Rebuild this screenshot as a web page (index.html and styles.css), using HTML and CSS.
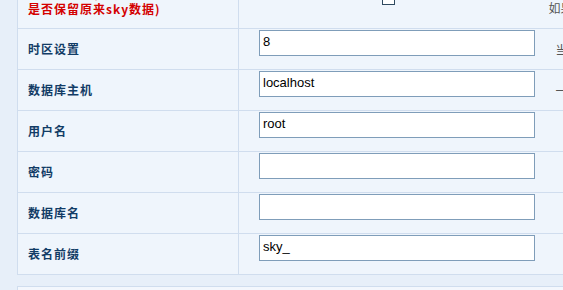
FILE: index.html
```html
<!DOCTYPE html>
<html lang="zh-CN">
<head>
<meta charset="utf-8">
<title>安装设置</title>
<link rel="stylesheet" href="styles.css">
</head>
<body>
<div class="page">
  <table class="form">
    <tr class="row-first">
      <th class="label"><span class="line-hidden">清空数据库(不选中则</span><br><span class="warn">是否保留原来sky数据)</span></th>
      <td class="field field-center"><input type="checkbox" class="chk"></td>
      <td class="note note-first">如果</td>
    </tr>
    <tr>
      <th class="label">时区设置</th>
      <td class="field"><input type="text" class="txt" value="8"></td>
      <td class="note">当前服务器时区</td>
    </tr>
    <tr>
      <th class="label">数据库主机</th>
      <td class="field"><input type="text" class="txt" value="localhost"></td>
      <td class="note">一般为localhost</td>
    </tr>
    <tr>
      <th class="label">用户名</th>
      <td class="field"><input type="text" class="txt" value="root"></td>
      <td class="note"></td>
    </tr>
    <tr>
      <th class="label">密码</th>
      <td class="field"><input type="password" class="txt" value=""></td>
      <td class="note"></td>
    </tr>
    <tr>
      <th class="label">数据库名</th>
      <td class="field"><input type="text" class="txt" value=""></td>
      <td class="note"></td>
    </tr>
    <tr>
      <th class="label">表名前缀</th>
      <td class="field"><input type="text" class="txt" value="sky_"></td>
      <td class="note"></td>
    </tr>
  </table>
  <div class="next-box"></div>
</div>
</body>
</html>
```

FILE: styles.css
```css
html, body {
  margin: 0;
  padding: 0;
  overflow: hidden;
  background: #e7eff9;
}

.page {
  width: 900px;
  padding-left: 17px;
  margin-top: -20px;
  font-family: "Noto Sans CJK SC", "Liberation Sans", sans-serif;
  font-size: 12px;
}

.form {
  width: 830px;
  border-collapse: collapse;
  border: 1px solid #d0ddee;
  background: #eff5fc;
}

.form tr {
  border-bottom: 1px solid #d0ddee;
}

.form th,
.form td {
  height: 41px;
  padding: 0;
  box-sizing: border-box;
}

.label {
  width: 221px;
  padding-left: 10px !important;
  text-align: left;
  vertical-align: middle;
  font-weight: bold;
  color: #123c66;
  letter-spacing: 1px;
  border-right: 1px solid #d0ddee;
  line-height: 16px;
}

.row-first th,
.row-first td {
  height: 48px;
}

.row-first .label {
  vertical-align: bottom;
  padding-bottom: 11px !important;
}

.warn {
  color: #d40000;
}

.line-hidden {
  color: #d40000;
}

.field {
  width: 307px;
  vertical-align: top;
  padding: 1px 0 0 20px !important;
}

.field-center {
  text-align: center;
  padding: 0 !important;
  vertical-align: top;
}

.txt {
  display: block;
  width: 276px;
  height: 26px;
  box-sizing: border-box;
  margin: 0;
  padding: 0 3px 3px;
  border: 1px solid #7f9db9;
  background: #fff;
  font-family: "Liberation Sans", Arial, sans-serif;
  font-size: 13px;
  color: #000;
  outline: none;
}

.chk {
  appearance: none;
  -webkit-appearance: none;
  display: inline-block;
  width: 13px;
  height: 13px;
  margin: 11px 0 0 -8px;
  border: 1px solid #2f4a60;
  background: #fff;
  vertical-align: top;
}

.note {
  vertical-align: middle;
  padding-left: 10px !important;
  color: #555;
  white-space: nowrap;
}

.note-first {
  vertical-align: bottom;
  padding-left: 3px !important;
  padding-bottom: 12px !important;
  line-height: 16px;
}

.next-box {
  width: 830px;
  height: 40px;
  margin-top: 11px;
  border: 1px solid #d0ddee;
  background: #f3f7fd;
}
```
